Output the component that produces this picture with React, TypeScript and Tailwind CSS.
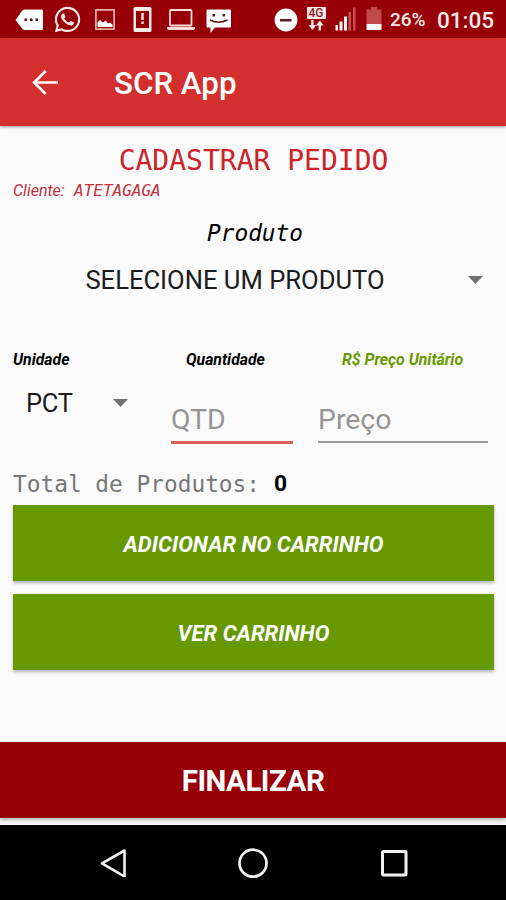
import type { ReactNode } from "react";
import { FaWhatsapp } from "react-icons/fa";

const mono = "font-['DejaVu_Sans_Mono',monospace]";

function StatusBar() {
  return (
    <div className="flex h-[38px] items-start bg-[#970007] pt-[7px] text-[#fbe9e7]">
      <svg className="ml-[15px] mt-[2px] h-[22px] w-7" viewBox="0 0 28 22">
        <path d="M9.5 0.5H26.5a1.500 1.500 0 0 1 1.500 1.500V19.500a1.500 1.500 0 0 1-1.500 1.500H9.500Q8 21 7 19.500L0.500 11 7 2Q8 0.500 9.500 0.500z" fill="#fff" />
        <path d="M9.500 9.500h2.500v2.500H9.500zM15 9.500h2.500v2.500h-2.500zM20.500 9.500h2.500v2.500h-2.500z" fill="#4a1013" />
      </svg>
      <FaWhatsapp className="ml-[10px] -mt-[2px] size-[29px]" />
      <svg className="ml-[13px] mt-[2px] h-[21px] w-5" viewBox="0 0 20 21">
        <rect x="0.9" y="0.9" width="18.200" height="19.200" fill="none" stroke="#f6c9c6" strokeWidth="1.500" />
        <path d="M2.500 18V13.500L5 11l3 2.500 2.500-2 2.500 3 2-1 2.500 2V18z" fill="#fff" />
      </svg>
      <svg className="ml-[18px] h-[25px] w-[19px]" viewBox="0 0 19 25">
        <path fillRule="evenodd" d="M2 0H17a1.500 1.500 0 0 1 1.500 1.500V23.500a1.500 1.500 0 0 1-1.500 1.500H2a1.500 1.500 0 0 1-1.500-1.500V1.500A1.500 1.500 0 0 1 2 0zM3 4V21H16V4z" fill="#fdeae6" />
        <path d="M8.300 6h2.400v7H8.300zM8.300 14.500h2.400v2.400H8.300z" fill="#fdeae6" />
      </svg>
      <svg className="ml-[14px] mt-[2px] h-[22px] w-[30px]" viewBox="0 0 30 22">
        <rect x="4" y="1" width="21.500" height="15.500" rx="0.800" fill="none" stroke="#fbdcd8" strokeWidth="1.800" />
        <path d="M1 18H29v1.500l-1 1.500H2L1 19.500z" fill="#fbdcd8" />
      </svg>
      <svg className="ml-[10px] mt-[2px] h-[25px] w-[25px]" viewBox="0 0 25 25">
        <path d="M1.500 0.500H24a1 1 0 0 1 1 1V17.500a1 1 0 0 1-1 1H9L4.500 24V18.500H1.500a1 1 0 0 1-1-1V1.500a1 1 0 0 1 1-1z" fill="#fff" />
        <path d="M6.500 5h2.500v2.500h-2.500zM16.500 5h2.500v2.500h-2.500z" fill="#6b1417" />
        <path d="M4 11Q12.500 15.500 21.500 11" fill="none" stroke="#6b1417" strokeWidth="1.500" />
      </svg>

      <svg className="ml-[43px] mt-[1px] size-6" viewBox="0 0 24 24">
        <circle cx="12" cy="12" r="11.400" fill="#fff" />
        <path d="M6 11h11.500v2.500H6z" fill="#5a1a22" />
      </svg>
      <div className="ml-[8px] flex w-5 flex-col items-center">
        <span className="flex h-[12px] w-[19px] items-center justify-center rounded-[1px] bg-[#fdeae6] font-['Roboto',sans-serif] text-[12px] leading-none font-medium text-[#8c1c20]">
          4G
        </span>
        <svg className="h-[12px] w-5" viewBox="0 0 20 12">
          <path d="M5.200 1h2.400v5H10.300L6.400 11 2.500 6H5.200zM12.600 11.500H15V6.500h2.700L13.800 1.500 9.900 6.500h2.700z" fill="#fdeae6" />
        </svg>
      </div>
      <svg className="ml-[9px] h-6 w-[21px]" viewBox="0 0 21 24">
        <path d="M0.500 18h2.500v5.500H0.500zM4.500 14.500h3v9h-3zM9 9.500h3v14H9z" fill="#fff3ee" />
        <path d="M13.500 5h2.500v18.500h-2.500zM18 0.500h2.500v23H18z" fill="#c4504f" />
      </svg>
      <svg className="ml-[10px] h-6 w-4" viewBox="0 0 16 24">
        <path d="M5 0h6v2.500h4.500V17H0.500V2.500H5z" fill="#bf4b4c" />
        <path d="M0.500 17h15v6H0.500z" fill="#fff" />
      </svg>
      <span className="ml-[8px] mt-[3px] w-[47px] font-['Roboto',sans-serif] text-[19px] leading-5 font-medium">26%</span>
      <span className="mt-[1px] font-['Roboto',sans-serif] text-[22.500px] leading-6 font-medium">01:05</span>
    </div>
  );
}

function Toolbar() {
  return (
    <header className="relative flex h-[88px] items-center bg-[#d32f2f] text-white shadow-[0_1px_3px_rgba(0,0,0,0.4)]">
      <svg className="ml-8 size-[26px]" viewBox="0 0 26 26" fill="none" stroke="#fff" strokeWidth="2.700">
        <path d="M26 13.500H2.500M13.700 2L2.200 13.500l11.500 11.500" />
      </svg>
      <h1 className="ml-[56px] mt-[4px] text-[31.300px] font-medium">SCR App</h1>
    </header>
  );
}

function Caret() {
  return (
    <svg className="h-[8px] w-[15px] shrink-0" viewBox="0 0 15 8">
      <path d="M0 0h15L7.500 8z" fill="#707070" />
    </svg>
  );
}

function CartButton({ children }: { children: ReactNode }) {
  return (
    <button className="flex h-[76px] w-full items-center justify-center bg-[#669900] pt-[3px] text-[22px] font-bold text-white italic shadow-[0_2px_3px_rgba(0,0,0,0.28)]">
      {children}
    </button>
  );
}

function NavBar() {
  return (
    <nav className="flex h-[75px] items-center justify-between bg-black pr-[98px] pl-[99px]">
      <svg className="size-7" viewBox="0 0 28 28" fill="none" stroke="#f2f2f2" strokeWidth="2.600" strokeLinejoin="round">
        <path d="M25.500 1.500V27.500L3 14.300z" />
      </svg>
      <svg className="-ml-[2px] size-[30px]" viewBox="0 0 30 30" fill="none" stroke="#f2f2f2" strokeWidth="2.700">
        <circle cx="15" cy="15.200" r="13.500" />
      </svg>
      <svg className="size-7" viewBox="0 0 28 28" fill="none" stroke="#f2f2f2" strokeWidth="3">
        <rect x="2.500" y="2.500" width="23.500" height="23.500" rx="1" />
      </svg>
    </nav>
  );
}

export default function App() {
  return (
    <div className="flex h-[900px] w-[506px] flex-col overflow-hidden bg-[#fafafa] font-['Roboto',sans-serif] text-black">
      <StatusBar />
      <Toolbar />

      <main className="flex flex-1 flex-col pr-[12px] pl-[13px]">
        <h2 className={`mt-[19px] text-center text-[28px] leading-8 text-[#cc2229] ${mono}`}>CADASTRAR PEDIDO</h2>
        <p className="mt-[4px] flex h-5 items-center text-[16px] leading-5 text-[#c4303c] italic">
          <span className="w-[61px]">Cliente:</span>
          <span className={mono}>ATETAGAGA</span>
        </p>

        <p className={`mt-[16px] pl-[3px] text-center text-[22.800px] leading-8 italic ${mono}`}>Produto</p>
        <div className="mt-[15px] flex h-8 items-center pr-[11px]">
          <span className="flex-1 pr-[11px] text-center text-[25.600px] text-[#1c1c1c]">SELECIONE UM PRODUTO</span>
          <Caret />
        </div>

        <div className="mt-[54px] flex h-5 items-center text-[15.800px] font-bold italic">
          <span className="w-[173px]">Unidade</span>
          <span className="w-[156px]">Quantidade</span>
          <span className="text-[#669900]">R$ Preço Unitário</span>
        </div>

        <div className="mt-[17px] flex h-[57px] items-start">
          <div className="flex h-8 w-[158px] items-center pl-[13px]">
            <span className="w-[87px] text-[25.500px] tracking-[-0.3px] text-[#1c1c1c]">PCT</span>
            <Caret />
          </div>
          <div className="flex h-[57px] w-[122px] items-center border-b-[3px] border-[#e0605a] pt-[13px] text-[28.400px] text-[#959595]">QTD</div>
          <div className="ml-[25px] flex h-[56px] w-[170px] items-center border-b-2 border-[#9a9a9a] pt-[13px] text-[28.400px] text-[#959595]">Preço</div>
        </div>

        <p className={`mt-[24px] flex h-8 items-center text-[22.800px] text-[#777777] ${mono}`}>
          <span>Total de Produtos:</span>
          <span className="ml-[14px] mt-[1px] font-['Roboto',sans-serif] font-bold text-black">0</span>
        </p>

        <div className="mt-[5px] flex flex-col gap-[13px]">
          <CartButton>ADICIONAR NO CARRINHO</CartButton>
          <CartButton>VER CARRINHO</CartButton>
        </div>
      </main>

      <button className="mb-[7px] flex h-[76px] shrink-0 items-center justify-center bg-[#970007] pt-[2px] text-[29.500px] font-bold tracking-[-0.5px] text-white shadow-[0_2px_4px_rgba(0,0,0,0.3)]">
        FINALIZAR
      </button>
      <NavBar />
    </div>
  );
}
